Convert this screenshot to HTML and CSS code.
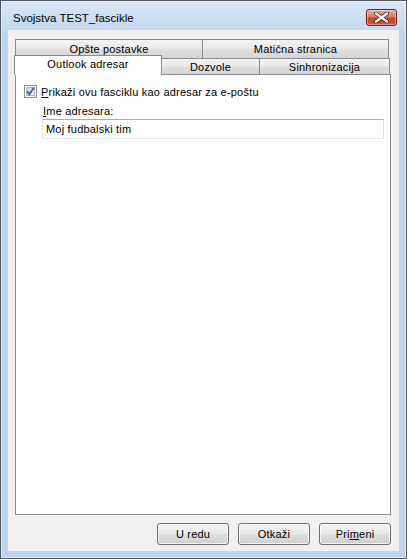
FILE: index.html
```html
<!DOCTYPE html>
<html lang="sr">
<head>
  <meta charset="UTF-8" />
  <title>Svojstva TEST_fascikle</title>
  <link rel="stylesheet" href="styles.css">
</head>
<body>
  <div class="window">
    <div class="titlebar">
      <span class="title">Svojstva TEST_fascikle</span>
      <button class="close" title="Zatvori">
        <svg width="17" height="11" viewBox="0 0 17 11">
          <path d="M3 1.5 L14 9.5 M14 1.5 L3 9.5" stroke="#5b2118" stroke-width="4" stroke-linecap="round" />
          <path d="M3 1.5 L14 9.5 M14 1.5 L3 9.5" stroke="#ffffff" stroke-width="2.2" stroke-linecap="round" />
        </svg>
      </button>
    </div>

    <div class="client">
      <div class="tab-row back">
        <div class="tab w188">Opšte postavke</div>
        <div class="tab w187">Matična stranica</div>
      </div>
      <div class="tab-row front">
        <div class="tab selected">Outlook adresar</div>
        <div class="tab w99">Dozvole</div>
        <div class="tab w131">Sinhronizacija</div>
      </div>

      <div class="panel">
        <label class="check-row">
          <svg class="checkbox" width="13" height="13" viewBox="0 0 13 13">
            <defs>
              <linearGradient id="cb" x1="0" y1="0" x2="1" y2="1">
                <stop offset="0" stop-color="#cdd1d6" />
                <stop offset="1" stop-color="#f7f7f7" />
              </linearGradient>
            </defs>
            <rect x="0.5" y="0.5" width="12" height="12" fill="#fff" stroke="#8e8f8f" />
            <rect x="2.5" y="2.5" width="8" height="8" fill="url(#cb)" stroke="#b2b6bb" />
            <path d="M3.2 6.4 L5.4 9.2 L9.9 2.6" fill="none" stroke="#3f5a9c" stroke-width="1.7" />
          </svg>
          <span><u>P</u>rikaži ovu fasciklu kao adresar za e-poštu</span>
        </label>
        <div class="field">
          <div class="field-label"><u>I</u>me adresara:</div>
          <div class="textbox">Moj fudbalski tim</div>
        </div>
      </div>

      <div class="buttons">
        <button class="btn">U redu</button>
        <button class="btn">Otkaži</button>
        <button class="btn">Pri<u>m</u>eni</button>
      </div>
    </div>
  </div>
</body>
</html>
```

FILE: styles.css
```css
body {
  margin: 0;
  font-family: "Liberation Sans", Arial, sans-serif;
  font-size: 11px;
  letter-spacing: 0.2px;
  color: #000;
}
.window {
  width: 407px;
  height: 559px;
  box-sizing: border-box;
  border: 1px solid #52565c;
  box-shadow: inset 0 0 0 1px rgba(255, 255, 255, 0.55);
  background: linear-gradient(#dbe7f5, #c4d8ed 29px, #bfd4eb 29px);
  padding: 0 7px 7px 7px;
  display: flex;
  flex-direction: column;
}
.titlebar {
  height: 29px;
  display: flex;
  align-items: center;
  justify-content: space-between;
  padding: 4px 2px 0 5px;
  box-sizing: border-box;
}
.title {
  font-size: 11.5px;
  letter-spacing: 0;
  color: #000;
}
.close {
  width: 31px;
  height: 17px;
  padding: 0;
  border: 1px solid #6d2a1f;
  border-radius: 3px;
  background: linear-gradient(#eab0a1, #d77b68 45%, #c7432d 55%, #c85a3f);
  box-shadow: inset 0 0 0 1px rgba(255, 255, 255, 0.35);
  display: flex;
  align-items: center;
  justify-content: center;
}
.client {
  flex: 1;
  background: #f0f0f0;
  padding: 9px 8px 6px 7px;
  display: flex;
  flex-direction: column;
}
.tab-row {
  display: flex;
  align-items: flex-end;
}
.tab-row.back {
  height: 19px;
}
.tab-row.front {
  height: 19px;
  margin-top: -3px;
  margin-left: -1px;
}
.tab {
  box-sizing: border-box;
  border: 1px solid #898c95;
  border-bottom: none;
  background: linear-gradient(#f3f3f3, #ebebeb 45%, #dedede 55%, #d6d6d6);
  display: flex;
  align-items: center;
  justify-content: center;
  white-space: nowrap;
}
.tab + .tab {
  margin-left: -1px;
}
.back .tab {
  height: 19px;
  padding-bottom: 1px;
}
.front .tab {
  height: 16px;
  padding-top: 1px;
}
.front .tab.selected {
  height: 20px;
  width: 148px;
  margin-bottom: -1px;
  padding: 0 0 3px 0;
  background: #fff;
  position: relative;
  z-index: 1;
}
.w188 { width: 188px; }
.w187 { width: 187px; }
.w99 { width: 99px; }
.w131 { width: 131px; }

.panel {
  height: 441px;
  box-sizing: border-box;
  border: 1px solid #898c95;
  background: #fff;
  padding: 10px 0 0 8px;
}
.check-row {
  display: flex;
  align-items: center;
  height: 13px;
  gap: 4px;
}
.checkbox {
  display: block;
  flex: none;
}
.field {
  padding-left: 18px;
  margin-top: 7px;
}
.field-label {
  line-height: 13px;
  padding-left: 1px;
}
.textbox {
  margin-top: 1px;
  width: 342px;
  height: 20px;
  box-sizing: border-box;
  border: 1px solid #abadb3;
  border-color: #abadb3 #dbdfe6 #e3e9ef #e2e3ea;
  padding: 0 3px;
  line-height: 18px;
}
.buttons {
  display: flex;
  justify-content: flex-end;
  gap: 9px;
  margin-top: 8px;
}
.btn {
  width: 72px;
  height: 22px;
  padding: 0;
  font-family: "Liberation Sans", Arial, sans-serif;
  font-size: 11px;
  letter-spacing: 0.2px;
  color: #000;
  border: 1px solid #707070;
  border-radius: 3px;
  background: linear-gradient(#f2f2f2, #ebebeb 45%, #dddddd 55%, #cfcfcf);
  box-shadow: inset 0 0 0 1px rgba(255, 255, 255, 0.7);
}
```
